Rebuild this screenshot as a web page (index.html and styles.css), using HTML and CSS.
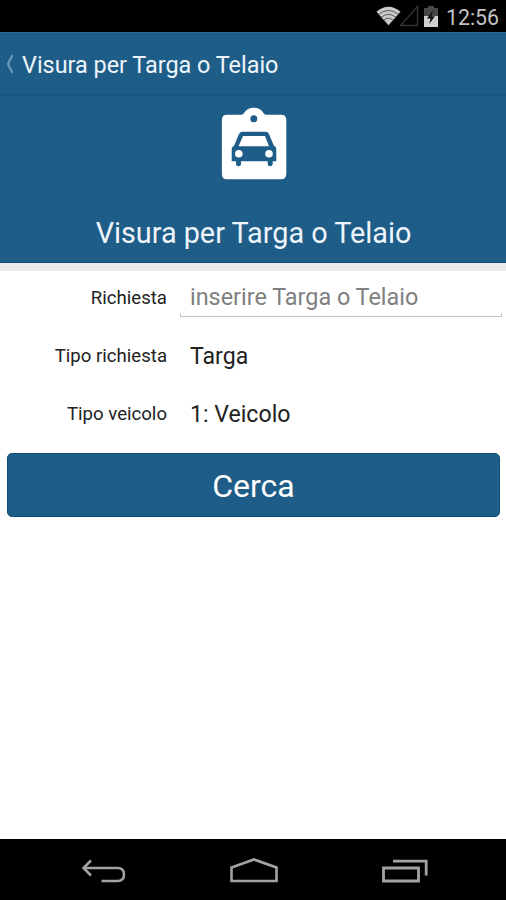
FILE: index.html
```html
<!DOCTYPE html>
<html lang="it">
<head>
    <meta charset="UTF-8">
    <meta name="viewport" content="width=device-width, initial-scale=1.0">
    <title>Visura per Targa o Telaio</title>
    <link rel="stylesheet" href="styles.css">
</head>
<body>

<div class="screen">
    <!-- status bar -->
    <div class="statusbar">
        <svg class="wifi" width="25" height="20" viewBox="0 0 26 20">
            <path d="M0.5 5.5Q13 -4.5 25.5 5.5L13 19.5Z" fill="#c9c9c9"/>
            <path d="M2.5 8.4Q13 0 23.5 8.4M5.2 11.5Q13 5 20.8 11.5M8 14.5Q13 10 18 14.5" fill="none" stroke="#333" stroke-width="0.8"/>
        </svg>
        <svg class="signal" width="20" height="22" viewBox="0 0 20 22">
            <path d="M18.5 1.5V20.5H1.5Z" fill="none" stroke="#343434" stroke-width="1.4"/>
        </svg>
        <svg class="battery" width="14" height="21" viewBox="0 0 14 21">
            <path d="M4 0H10V2H14V10H0V2H4Z" fill="#484848"/>
            <path d="M0 10H14V21H0Z" fill="#cfcfcf"/>
            <path d="M8.8 4.5L3 12.5H6.5L5.2 18L11 10.2H7.6Z" fill="#111"/>
        </svg>
        <span class="clock">12:56</span>
    </div>

    <!-- action bar -->
    <div class="actionbar">
        <svg class="back" width="8" height="20" viewBox="0 0 8 20">
            <path d="M7.5 1L3 10L7.5 19" fill="none" stroke="#6797b8" stroke-width="2.4"/>
        </svg>
        <span class="actionbar-title">Visura per Targa o Telaio</span>
    </div>

    <div class="hero">
        <svg class="hero-icon" width="66" height="73" viewBox="0 0 66 73">
            <path d="M6 7.7H20.5Q22 7.7 23 6C27 -1 38.5 -1 42.5 6Q43.5 7.7 45 7.7H60Q65.3 7.7 65.3 13V67Q65.3 72.3 60 72.3H6Q0.9 72.3 0.9 67V13Q0.9 7.7 6 7.7Z" fill="#fff"/>
            <circle cx="32.8" cy="11.7" r="3.5" fill="#1e5d88"/>
            <path d="M21.5 24.7H44.5Q47 24.7 48 27L52.8 38.5Q55.3 39.5 55.3 42V54.3H51.7V57Q51.7 59.3 49.2 59.3Q46.7 59.3 46.7 57V54.3H20V57Q20 59.3 17.5 59.3Q15 59.3 15 57V54.3H10.7V42Q10.7 39.5 13.2 38.5L18 27Q19 24.7 21.5 24.7Z" fill="#1e5d88"/>
            <path d="M22 29H44L48 39.3H17.5Z" fill="#fff"/>
            <circle cx="17.8" cy="46.8" r="3.8" fill="#fff"/>
            <circle cx="48" cy="46.8" r="3.8" fill="#fff"/>
        </svg>
        <h1>Visura per Targa o Telaio</h1>
    </div>

    <form class="form">
        <div class="row">
            <label for="richiesta">Richiesta</label>
            <div class="field">
                <input id="richiesta" type="text" placeholder="inserire Targa o Telaio">
                <div class="underline"></div>
            </div>
        </div>
        <div class="row">
            <label>Tipo richiesta</label>
            <div class="value">Targa</div>
        </div>
        <div class="row">
            <label>Tipo veicolo</label>
            <div class="value">1: Veicolo</div>
        </div>
        <button type="button">Cerca</button>
    </form>

    <!-- navigation bar -->
    <div class="navbar">
        <svg width="46" height="28" viewBox="0 0 46 28">
            <path d="M10 2.5L2.5 10L10 17.5M3 10H36.5Q43 10 43 16.5T36.5 23H20.5" fill="none" stroke="#a3a3a3" stroke-width="2.5"/>
        </svg>
        <svg width="50" height="28" viewBox="0 0 50 28">
            <path d="M1.5 9.5L24 1.5L46.5 9.5V23H1.5Z" fill="none" stroke="#a3a3a3" stroke-width="2.6"/>
        </svg>
        <svg width="46" height="28" viewBox="0 0 46 28">
            <path d="M1.5 10H36.5V23H1.5ZM11 3.2H44.2V17.5" fill="none" stroke="#a3a3a3" stroke-width="2.8"/>
        </svg>
    </div>
</div>

</body>
</html>
```
FILE: styles.css
```css
* {
    box-sizing: border-box;
}
body {
    margin: 0;
    font-family: Roboto, sans-serif;
    background-color: #fff;
}
.screen {
    display: flex;
    flex-direction: column;
    height: 900px;
}
.statusbar {
    display: flex;
    justify-content: flex-end;
    align-items: center;
    height: 32px;
    padding-right: 7px;
    background-color: #000;
}
.wifi {
    margin-right: -2px;
}
.signal {
    margin-right: 5px;
}
.battery {
    margin-right: 8px;
}
.clock {
    font-size: 21.3px;
    line-height: 30px;
    padding-top: 4px;
    color: #c4c4c4;
}
.actionbar {
    display: flex;
    align-items: center;
    height: 64px;
    padding-left: 5px;
    background-color: #1e5d88;
    border-top: 1px solid #2a6a95;
    border-bottom: 2px solid #1a547d;
}
.actionbar-title {
    margin-left: 9px;
    padding-top: 2px;
    font-size: 23.4px;
    color: #eef5fb;
}
.hero {
    display: flex;
    flex-direction: column;
    align-items: center;
    height: 167px;
    padding: 11px 0 0 1px;
    background-color: #1e5d88;
    border-bottom: 1px solid #14507c;
}
.hero-icon {
    margin-left: 1px;
}
h1 {
    margin: 35px 0 0;
    font-size: 28.8px;
    font-weight: 400;
    line-height: 36px;
    color: #eef5fb;
}
.form {
    flex: 1;
    border-top: 8px solid #ebebeb;
    padding: 0 4px 0 7px;
}
.row {
    display: flex;
    align-items: center;
    height: 58px;
}
.row:first-child {
    height: 56px;
    padding-bottom: 2px;
}
label {
    width: 160px;
    font-size: 18.6px;
    text-align: right;
    color: #222;
}
.field {
    flex: 1;
    height: 38px;
    margin-left: 13px;
}
input {
    display: block;
    width: 100%;
    height: 34px;
    padding: 2px 10px 0;
    border: none;
    outline: none;
    font-family: inherit;
    font-size: 23.4px;
    background: none;
}
input::placeholder {
    color: #808080;
}
/* line with short upturned ends, as in Holo text fields */
.underline {
    height: 4px;
    border: 1px solid #c4c4c4;
    border-top: none;
}
.value {
    margin-left: 23px;
    padding-top: 1px;
    font-size: 23.1px;
    color: #222;
}
button {
    display: block;
    width: 493px;
    height: 64px;
    margin-top: 10px;
    border: 1px solid #0f4d7a;
    border-radius: 5px;
    padding-top: 3px;
    font-family: inherit;
    font-size: 32px;
    color: #fff;
    background-color: #1e5d88;
}
.navbar {
    display: flex;
    justify-content: space-between;
    height: 61px;
    padding: 19px 78px 0 81px;
    background-color: #000;
}
```
